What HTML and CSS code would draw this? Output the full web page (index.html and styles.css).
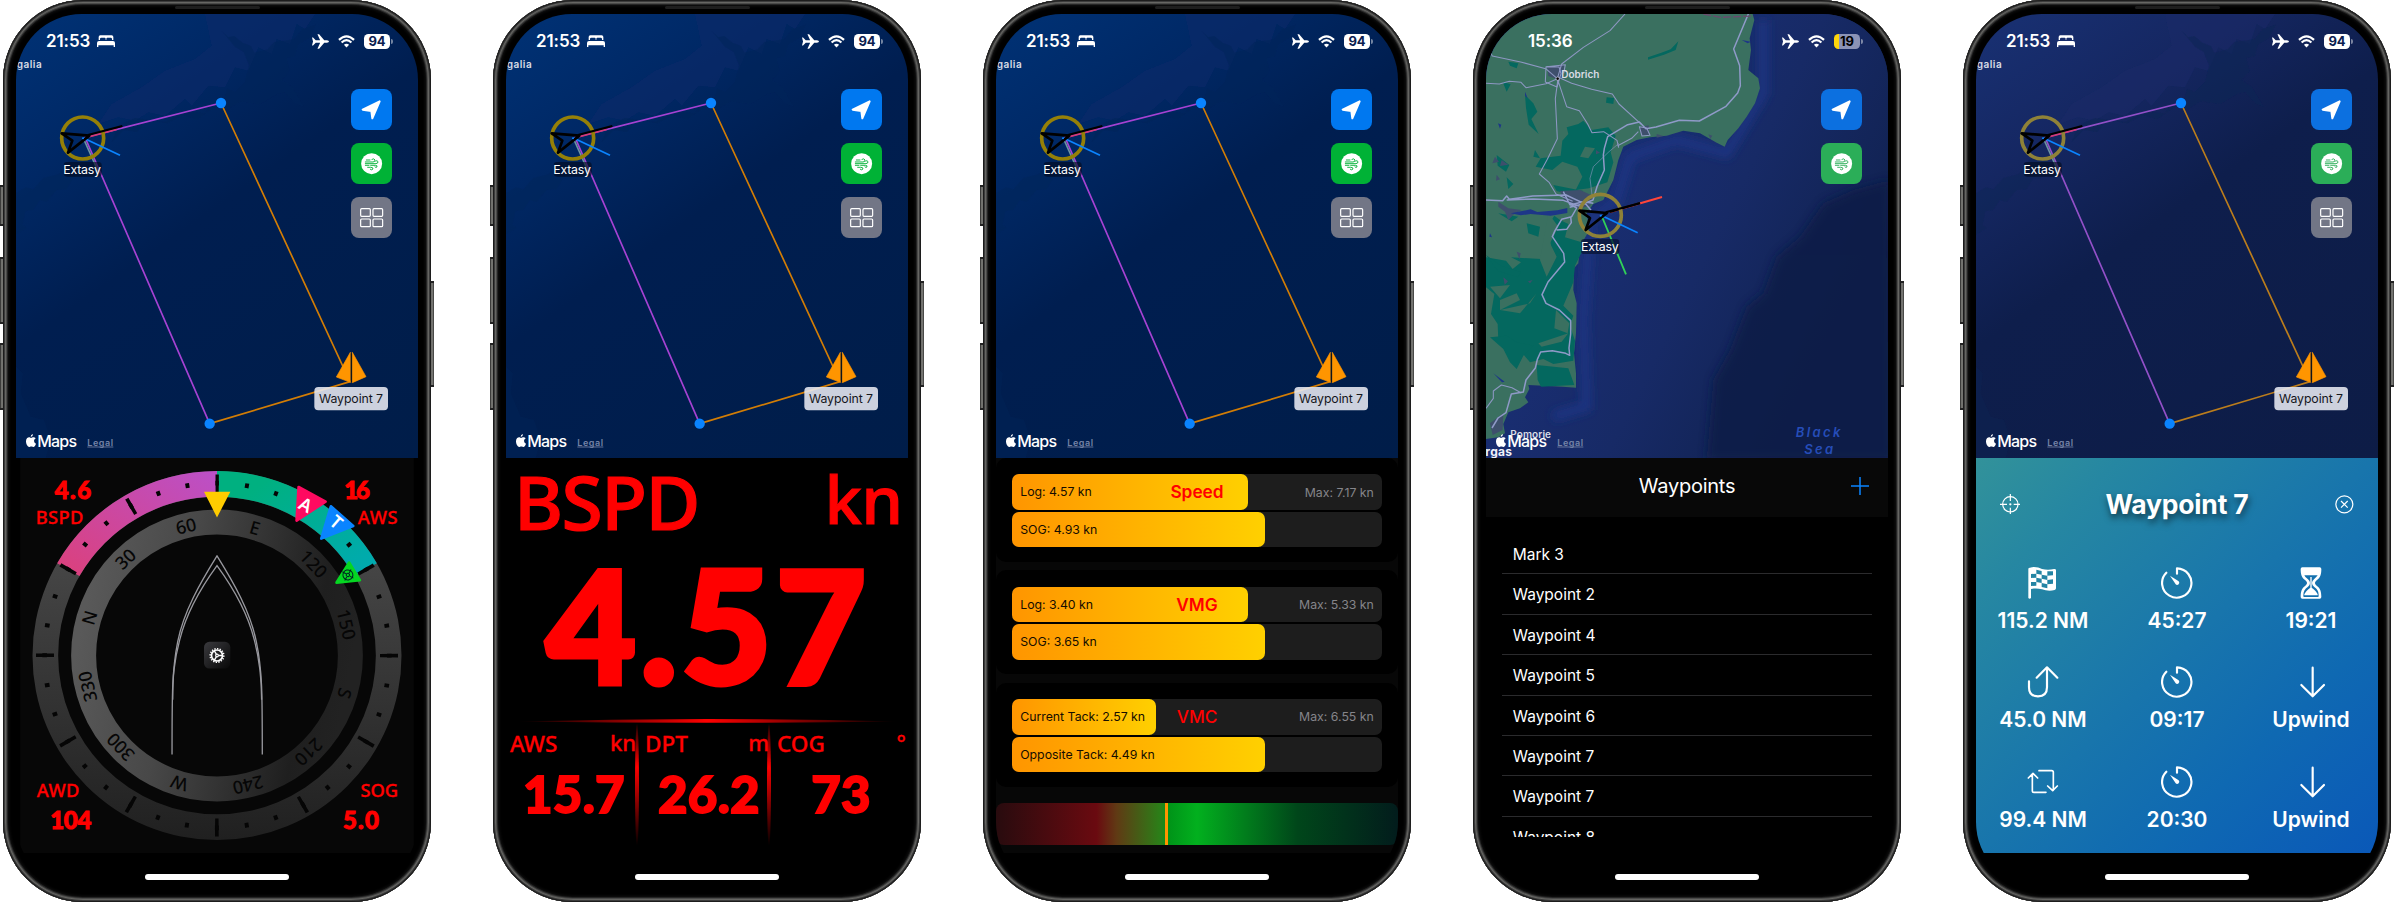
FILE: index.html
```html
<!DOCTYPE html>
<html lang="en">
<head>
<meta charset="utf-8">
<title>Sailing app screens</title>
<link rel="stylesheet" href="styles.css">
</head>
<body>
<svg class="defs" aria-hidden="true">
  <defs>
    <filter id="soft"><feGaussianBlur stdDeviation="1.6"/></filter>
  </defs>
  <symbol id="bed" viewBox="0 0 54 36"><path fill="currentColor" d="M5 15V6q0-5 5-5h34q5 0 5 5v9h-4v-3q0-4-4-4H31q-3 0-3 4v3h-2v-3q0-4-3-4H13q-4 0-4 4v3zM0 36V24q0-6 6-6h42q6 0 6 6v12h-4v-5H4v5z"/></symbol>
  <symbol id="plane" viewBox="0 0 50 44"><path fill="currentColor" d="M0 10h3l8 8h13L16 1h5l15 17h8q6 1 6 4t-6 4h-8L21 43h-5l8-17H11l-8 8H0l3-12z"/></symbol>
  <symbol id="wifi" viewBox="0 0 52 38"><g fill="none" stroke="currentColor" stroke-width="6.500"><path d="M3 14Q26-8 49 14"/><path d="M11 22q15-14 30 0"/></g><path fill="currentColor" d="M18 29q8-7 16 0l-8 8z"/></symbol>
  <symbol id="arrow" viewBox="0 0 124 124"><path fill="#fff" stroke="#fff" stroke-width="6" stroke-linejoin="round" d="M86 37 35 62l26 4 3 22z"/></symbol>
  <symbol id="wind" viewBox="0 0 124 124"><circle cx="62" cy="62" r="31.500" fill="#fff"/><g fill="none" stroke="currentColor" stroke-width="2.800" stroke-linecap="round"><path d="M43 57h23q7 0 6-6-2-6-9-2"/><path d="M43 62h32q7-1 6-6-2-5-7-2"/><path d="M46 51h11"/><path d="M43 67h11M59 67h14q7 0 5 5-3 3-6 0"/><path d="M50 73h9q8 0 7 5-3 5-8 1"/></g></symbol>
  <symbol id="tiles" viewBox="0 0 124 124"><g fill="none" stroke="#fff" stroke-width="3.600"><rect x="29" y="35" width="29" height="23" rx="3"/><rect x="66" y="35" width="29" height="23" rx="3"/><rect x="29" y="66" width="29" height="23" rx="3"/><rect x="66" y="66" width="29" height="23" rx="3"/></g></symbol>
  <symbol id="apple" viewBox="0 0 30 40"><path fill="#fff" d="M21 0q0 8-7 9 0-7 7-9zM15 12c3 0 5-3 9-2q4 1 5 3-5 3-5 8 1 6 6 8c-2 6-5 11-9 10-4-2-6-2-10 0C5 40 0 30 0 22c0-9 6-13 11-12z"/></symbol>
  <symbol id="boat" viewBox="-70 -70 420 260" overflow="visible">
    <circle r="63" fill="none" stroke="var(--ring)" stroke-width="11"/>
    <path d="M2 0 112 52" stroke="#0a84ff" stroke-width="5"/>
    <path d="M16-9 119-36" stroke="#000" stroke-width="6"/>
    <path d="M-63-14 20-7-44 44-31 8z" fill="none" stroke="#000" stroke-width="8" stroke-linejoin="round"/>
    <circle cx="1" cy="1" r="3" fill="#0a84ff"/>
  </symbol>
  <symbol id="timer" viewBox="0 0 96 96"><path d="M48 20V4A44 44 0 1 1 16 17" fill="none" stroke="#fff" stroke-width="6.500" stroke-linecap="round" stroke-linejoin="round"/><path d="m27 26 26 17q4 5 0 9-5 4-9 0z" fill="#fff"/></symbol>
  <symbol id="down" viewBox="0 0 96 96"><path d="M53 5v86M19 57l34 34 34-34" fill="none" stroke="#fff" stroke-width="6.500" stroke-linecap="round" stroke-linejoin="round"/></symbol>
  <symbol id="route-map" viewBox="48 42 1206 1332">
    <path fill="var(--shelf)" filter="url(#soft)" opacity=".6" d="M615 42h330l-30 45-25-15-20 60-40-15-15 45-40-20-30 70-40-10-30 60-50-5-50 60-20-20-60 50-50-10-40 25-50-10-60 20 40-60 90-50 70-50 90-35 50-40z"/>
    <path fill="var(--shade)" filter="url(#soft)" opacity=".55" d="M665 92l20 20 18-4 24 20 26 10 10 20 40-10 20-22 60-8 24-30 40-14-20 40-34 20-8 34-26 6 10 40-24 26 30 20 36 60-26-10-30-34-24 6-50 30-60-8-40 26-30-14-60 42-40-12-50 24-60-10-30 36-40-6-36 36 20-50 50-22 90 12 60-30 60 4 16-26 40-8 10-40 24 10 30-30 12-50-16-40-26-16z"/>
    <path fill="var(--shade)" filter="url(#soft)" opacity=".45" d="M48 580l30-18 22 6 30-34 46-12 34-44 30-10 30 20-30 50-20-4-20 34-30 2-30 36-20-6-20 30-24 4-8 40 12 10-32 20z"/>
    <path fill="var(--shade)" filter="url(#soft)" opacity=".35" d="M48 1100l20 20-6 60 30 70 40 10 20 60-15 54H48z"/>
    <text class="place" x="50" y="205" textLength="75">galia</text>
    <g fill="none" stroke-width="5">
      <path stroke="var(--leg)" d="m663 309-408 103L629 1271"/>
      <path stroke="var(--next)" d="m663 309 387 836-421 126"/>
      <path stroke="#d23a7a" d="m268 410 82-22"/>
      <path stroke="#6d93a3" d="m251 417 44 98"/>
    </g>
    <circle cx="663" cy="309" r="15.500" fill="#0a84ff"/><circle cx="629" cy="1271" r="15.500" fill="#0a84ff"/>
    <use href="#boat" x="178" y="344" width="420" height="260"/>
    <rect x="191" y="486" width="114" height="44" rx="10" fill="#020b20" opacity=".65"/>
    <text class="tag" x="190" y="521" textLength="113">Extasy</text>
    <path d="M1051 1057v90l-42-16zM1057 1057l41 73-41 18z" fill="#ff9500" stroke="#ff9500" stroke-linejoin="round" stroke-width="2"/><path d="M1054 1060v86" stroke="#111" stroke-width="3"/>
    <rect x="943" y="1161" width="221" height="70" rx="12" fill="#e8eaf2" opacity=".88"/>
    <text class="tag dark" x="957" y="1209" textLength="192">Waypoint 7</text>
    <use href="#credit"/>
  </symbol>
  <symbol id="credit" overflow="visible">
    <use href="#apple" x="78" y="1302" width="30" height="40"/>
    <text class="maps" x="112" y="1341" textLength="119">Maps</text>
    <text class="legal" x="262" y="1337" textLength="77">Legal</text>
    <path d="M262 1341h78" stroke="#7482a6" stroke-width="2.500"/>
  </symbol>
</svg>

<main class="gallery">
  <article class="phone night">
    <i class="key k1"></i><i class="key k2"></i><i class="key k3"></i><i class="key k4"></i>
    <div class="shell"><i class="speaker"></i><div class="screen">
      <section class="map">
        <svg class="chart"><use href="#route-map"/></svg>
        <header class="status"><span class="time">21:53</span><svg class="bed"><use href="#bed"/></svg><svg class="plane"><use href="#plane"/></svg><svg class="wifi"><use href="#wifi"/></svg><span class="battery">94</span></header>
        <nav class="tools"><span class="tool blue"><svg><use href="#arrow"/></svg></span><span class="tool green"><svg><use href="#wind"/></svg></span><span class="tool grey"><svg><use href="#tiles"/></svg></span></nav>
      </section>
      <section class="panel">
        <svg class="dial" viewBox="48 54 1206 1186">
          <defs>
            <linearGradient id="rim" x1="0" y1="0" x2="0" y2="1"><stop offset=".2" stop-color="#484848"/><stop offset="1" stop-color="#202020"/></linearGradient>
            <linearGradient id="card" x1="0" y1=".35" x2="1" y2=".55"><stop offset="0" stop-color="#595959"/><stop offset=".35" stop-color="#484848"/><stop offset=".85" stop-color="#1f1f1f"/><stop offset="1" stop-color="#222"/></linearGradient>
            <linearGradient id="port" x1="0" y1="1" x2="1" y2="0"><stop offset="0" stop-color="#dc407a"/><stop offset="1" stop-color="#bb50c8"/></linearGradient>
            <linearGradient id="star" x1="0" y1="0" x2="1" y2="1"><stop offset=".2" stop-color="#00b080"/><stop offset="1" stop-color="#00aab4"/></linearGradient>
            <linearGradient id="btn" x1="0" y1="0" x2="1" y2="1"><stop offset="0" stop-color="#3a3a3e"/><stop offset="1" stop-color="#080808"/></linearGradient>
          </defs>
          <path fill="#070707" d="M60 54h1182v1186H60z"/>
          <path fill="url(#rim)" fill-rule="evenodd" d="M97 647a554 554 0 0 1 1108 0a554 554 0 0 1-1108 0zM174 647a477 477 0 0 0 954 0a477 477 0 0 0-954 0z"/>
          <path fill="url(#port)" d="M171.200 370A554 554 0 0 1 651 93v77A477 477 0 0 0 237.900 408.500z"/>
          <path fill="url(#star)" d="M1130.800 370A554 554 0 0 0 651 93v77a477 477 0 0 1 413.100 238.500z"/>
          <g transform="rotate(-90 651 647)" fill="none" stroke="#050505">
            <circle cx="651" cy="647" r="517.500" stroke-width="14" pathLength="36" stroke-dasharray=".13 .87" stroke-dashoffset=".065"/>
            <circle cx="651" cy="647" r="516.500" stroke-width="54" pathLength="12" stroke-dasharray=".04 .96" stroke-dashoffset=".02"/>
          </g>
          <circle cx="651" cy="647" r="400.500" fill="none" stroke="url(#card)" stroke-width="75"/>
          <g class="bearing" transform="translate(651 647)">
            <text transform="rotate(-13.500)" y="-380">60</text><text transform="rotate(16.500)" y="-380">E</text><text transform="rotate(46.500)" y="-380">120</text><text transform="rotate(76.500)" y="-380">150</text><text transform="rotate(106.500)" y="-380">S</text><text transform="rotate(136.500)" y="-380">210</text><text transform="rotate(166.500)" y="-380">240</text><text transform="rotate(196.500)" y="-380">W</text><text transform="rotate(226.500)" y="-380">300</text><text transform="rotate(256.500)" y="-380">330</text><text transform="rotate(286.500)" y="-380">N</text><text transform="rotate(316.500)" y="-380">30</text>
          </g>
          <g fill="none" stroke="#98989e" stroke-width="4">
            <path d="M516 944C516 760 516 690 533 605 551 515 600 430 651 348 702 430 751 515 769 605 787 690 787 760 787 944"/>
            <path d="M518 780C518 710 522 665 539 600 560 515 605 440 651 377 697 440 742 515 763 600 780 665 785 710 785 780"/>
          </g>
          <rect x="612" y="606" width="79" height="80" rx="16" fill="url(#btn)"/>
          <g fill="none" stroke="#fff" transform="translate(651 647)"><circle r="16.500" stroke-width="5"/><circle r="20.500" stroke-width="4.500" pathLength="16" stroke-dasharray=".5 .5"/><path stroke-width="4" d="M4 0h12M-2-4-8-14M-2 4-8 14"/><circle r="4" stroke-width="3.500"/></g>
          <path fill="#ffcc00" d="M612 155h79l-40 78z"/>
          <g stroke-width="8" stroke-linejoin="round">
            <path fill="#ff0a60" stroke="#ff0a60" d="m896 141 81 44-87 57z"/>
            <path fill="#0a84ff" stroke="#0a84ff" d="m993 199 67 59-96 38z"/>
            <path fill="#06d622" stroke="#06d622" d="m1048 368 32 53-70 7z"/>
          </g>
          <text class="mark" transform="translate(917 195) rotate(28)" y="19">A</text><text class="mark" transform="translate(1009 247) rotate(40)" y="19">T</text>
          <g transform="translate(1044 405) rotate(30)" fill="none" stroke="#022" stroke-width="3"><circle r="15"/><path d="M-19 0H-7M7 0h12M0-19V-7M0 7v12"/><circle r="5"/></g>
          <g class="num"><text x="164" y="177" textLength="109">4.6</text><text x="1033" y="177" textLength="77">16</text><text x="150" y="1167" textLength="124">104</text><text x="1029" y="1167" textLength="108">5.0</text></g>
          <g class="lbl"><text x="107" y="251" textLength="143">BSPD</text><text x="1074" y="251" textLength="119">AWS</text><text x="110" y="1071" textLength="128">AWD</text><text x="1082" y="1071" textLength="113">SOG</text></g>
        </svg>
      </section>
      <i class="home"></i>
    </div></div>
  </article>

  <article class="phone night">
    <i class="key k1"></i><i class="key k2"></i><i class="key k3"></i><i class="key k4"></i>
    <div class="shell"><i class="speaker"></i><div class="screen">
      <section class="map">
        <svg class="chart"><use href="#route-map"/></svg>
        <header class="status"><span class="time">21:53</span><svg class="bed"><use href="#bed"/></svg><svg class="plane"><use href="#plane"/></svg><svg class="wifi"><use href="#wifi"/></svg><span class="battery">94</span></header>
        <nav class="tools"><span class="tool blue"><svg><use href="#arrow"/></svg></span><span class="tool green"><svg><use href="#wind"/></svg></span><span class="tool grey"><svg><use href="#tiles"/></svg></span></nav>
      </section>
      <section class="panel readout">
        <div class="big-head"><span class="big-name">BSPD</span><span class="big-unit">kn</span></div>
        <div class="big-value">4.57</div>
        <svg class="rule" viewBox="0 0 402 6" preserveAspectRatio="none"><defs><linearGradient id="fade"><stop offset="0" stop-color="#f00" stop-opacity="0"/><stop offset=".5" stop-color="#f00"/><stop offset="1" stop-color="#f00" stop-opacity="0"/></linearGradient></defs><path fill="url(#fade)" d="M10 3.500Q201-1.500 392 3.500 201 6 10 3.500z"/></svg>
        <div class="trio">
          <div class="cell"><div class="cell-head"><span>AWS</span><span class="u">kn</span></div><div class="cell-value">15.7</div></div>
          <div class="cell barred"><div class="cell-head"><span>DPT</span><span class="u">m</span></div><div class="cell-value">26.2</div></div>
          <div class="cell barred"><div class="cell-head"><span>COG</span><span class="u deg">°</span></div><div class="cell-value mid">73</div></div>
        </div>
      </section>
      <i class="home"></i>
    </div></div>
  </article>

  <article class="phone night">
    <i class="key k1"></i><i class="key k2"></i><i class="key k3"></i><i class="key k4"></i>
    <div class="shell"><i class="speaker"></i><div class="screen">
      <section class="map">
        <svg class="chart"><use href="#route-map"/></svg>
        <header class="status"><span class="time">21:53</span><svg class="bed"><use href="#bed"/></svg><svg class="plane"><use href="#plane"/></svg><svg class="wifi"><use href="#wifi"/></svg><span class="battery">94</span></header>
        <nav class="tools"><span class="tool blue"><svg><use href="#arrow"/></svg></span><span class="tool green"><svg><use href="#wind"/></svg></span><span class="tool grey"><svg><use href="#tiles"/></svg></span></nav>
      </section>
      <section class="panel gauges">
        <div class="group">
          <div class="bar"><span class="fill" style="width:63.8%">Log: 4.57 kn</span><span class="max">Max: 7.17 kn</span><b class="bar-title">Speed</b></div>
          <div class="bar"><span class="fill" style="width:68.3%">SOG: 4.93 kn</span></div>
        </div>
        <div class="group">
          <div class="bar"><span class="fill" style="width:63.8%">Log: 3.40 kn</span><span class="max">Max: 5.33 kn</span><b class="bar-title">VMG</b></div>
          <div class="bar"><span class="fill" style="width:68.3%">SOG: 3.65 kn</span></div>
        </div>
        <div class="group">
          <div class="bar"><span class="fill" style="width:39%">Current Tack: 2.57 kn</span><span class="max">Max: 6.55 kn</span><b class="bar-title thin">VMC</b></div>
          <div class="bar"><span class="fill" style="width:68.3%">Opposite Tack: 4.49 kn</span></div>
        </div>
        <div class="meter"><i class="needle"></i></div>
      </section>
      <i class="home"></i>
    </div></div>
  </article>

  <article class="phone dusk">
    <i class="key k1"></i><i class="key k2"></i><i class="key k3"></i><i class="key k4"></i>
    <div class="shell"><i class="speaker"></i><div class="screen">
      <section class="map">
        <svg class="chart" viewBox="48 42 1206 1332">
          <defs><linearGradient id="deep" x1="0" y1="0" x2="1" y2=".55"><stop offset=".3" stop-color="#1a2f76"/><stop offset=".65" stop-color="#172a66"/><stop offset="1" stop-color="#10214f"/></linearGradient><filter id="haze"><feGaussianBlur stdDeviation="14"/></filter></defs>
          <path fill="url(#deep)" d="M48 42h1206v1332H48z"/>
          <path fill="#0c1b46" filter="url(#haze)" opacity=".85" d="M1260 540l-110 30-90 40-70 100-70 60-40 110-50 40-50 130-50 90-20 240h560z"/>
          <path fill="none" stroke="#1b3484" stroke-width="26" filter="url(#haze)" d="M880 60v220l-110 180-150-40-140 50-40 130-80 60-20 300 10 260-100 30"/>
          <path fill="#3a7060" d="M48 42h800l5 18-14 55 4 35-8 60 30 25 5 30-15 45-25 40-25 35-32 35-9 20-24-12-50-28-50-8-50 15-50 5-40 8-40 20-15 40-15 60-20 40-10 20-30 12-20 28 8 50-28 50-5 50-13 15-2 65 10 40-2 90-6 60 6 60v43l-40-3-103-5 3 12-13 25 10 15-25 18-35 12-15 35 5 28-20 12-37 5z"/>
          <g fill="#04685f">
            <path d="M340 362l25 28 50-8 22 25-15 50 8 30-18 60-55 18-40 5 20-40-15-30-45-15-30 25-50-10 15-25 60-8 5-45 18-20-5-20 35-10z"/>
            <path d="M165 285l25 25 12 25-18 22 22 45-30-28-8-50zM98 245l24 8-12 22zM115 185l30 5-5 15-20-8zM410 292l22 2-2 18-22-4zM195 450l15 25-20-5zM80 465l38 30-10 20-25-18zM110 532l20 20-15 15z"/>
            <path d="M534 172l40-14 28-10 23-24-8 26-35 14-48 15zM250 555l90 18-20 15-60-15z"/>
            <path d="M270 660l25 12-10 40 50 15 5 20-25 50-5 50-30 70 30 30-10 30 15 45-5 60-60 10-30-15-40 10-50-60-45-5-2-50-20-30 10-60-25-20v-90l60 10 20 25 25-20-30-15 90 5 30-40-10-60 20-30z"/>
            <path d="M48 765l45 32 60 20-10 15-60-20zM200 1095l95 10 18 50-100 5-10-20zM60 1012l50-5 30 20 50 10-30 30-20 40-20-20-20-40zM170 670l40 10-5 30-30-10zM85 640l60 10-20 14z"/>
          </g>
          <g fill="#3a7060"><path d="M235 640l30 40-25 50 20 40-30 60-20-50zM90 900l50-20 10 20-60 30zM60 860l60-5-30 40zM200 880l-20 30-90 20 60 10zM258 930l40 40-5 30-40-15zM205 1030l90-30-20 25-60 15zM330 470l15-30 30 5-20 30z"/></g>
          <g fill="#3e4f6c"><path d="M232 200l50-5-2 30-10 15-35-12zM508 382l28-6 2 28-24 2zM270 573l60-3 40 18-10 30-40 8-40-30zM75 470l12 15-20 5zM95 480l20 14-25 4zM85 605l30 20 40 5-20 10-20 20-10-25-20-15zM378 450l12 8-12 5zM80 524l10 14-12 4zM100 832l14 12-10 10zM140 755l12 5-4 18zM180 850l8-10-14 4zM715 403l12 4-6 10zM560 402l20 6-20 5zM60 1270l40-30-2 50-30 15z"/></g>
          <g fill="#1d3688"><path d="M122 640l60-12 20 8 60-5 30-7v15l-50 8-60-5-30 4zM165 275l8 20-8-8zM84 370l10 4-4 12zM60 700l6 12-8-2zM70 1120l34 25-8 2zM815 120l28 5-10 5z"/></g>
          <g fill="none" stroke="#8d97c2" stroke-width="3.200" stroke-linejoin="round">
            <path d="M465 42 420 92l-80 50-65 50-13 44-35-30-75-20-85-18-10-18M48 250l40 2 30-8 35 3 15 16 60-12 34-15M264 236l-8 60 6 120-30 62-24 44 30 26 20 34 50 22"/>
            <path d="M262 236l28 84 38 12 25 40 13 26 35-3 40 26 5 22M265 232l40 18 60 18 62 14 20 30 68 62M228 200l-2 46 35 15 12-40-6-20zM230 200l56-6-5 26"/>
            <path d="M447 430l-30 25-47 45-10 35 6 50" stroke-width="2.500" opacity=".7"/>
            <path d="M48 1225l22-30v-22l24-18 32 8 28 16M505 395l-20 20-42 22M508 380l22 4 10 22-24 2z"/>
          </g>
          <g fill="none" stroke="#8f9ac8" stroke-width="4.500" stroke-linejoin="round">
            <path d="M835 42l-44 105 18 50 2 60-8 22-35 40-80 44-60-2-70 20-30 5-20-20-35 8-60 36-10 35-3 20 3 45-22 50-12 40-30 12-40 10"/>
            <path d="M48 600l50 2 12-14 8 10 70-10 100-3 60 28 15 18M110 600l80-3 90 4 50 18M300 612l20 12-15 26-30 8-20 34-8 18 34 50 3 26-50 60-18 38 12 26 40 20 34 32v40l-5 42 2 22-12-6-40-8-35 4-10 22-6 26-28 36-8 36-36 6-16 56-24 16-18 30M260 690l30-2 14-20-2-18M280 575l20 40 40-10 30 5"/>
          </g>
          <path fill="none" stroke="#6b4a6e" stroke-width="4" stroke-dasharray="24 6" d="M700 42l50 10 98-4"/>
          <circle cx="263" cy="236" r="5" fill="#000" stroke="#ccd" stroke-width="2"/>
          <text class="place" x="274" y="235" textLength="114">Dobrich</text>
          <text class="place" x="121" y="1314" textLength="122">Pomorie</text>
          <text class="place rgas" x="46" y="1369" textLength="80">rgas</text>
          <text class="sea-name" x="977" y="1311" textLength="134">Black</text><text class="sea-name" x="1003" y="1363" textLength="86">Sea</text>
          <g stroke-width="5.500"><path stroke="#ff453a" d="m420 636 156-45"/><path stroke="#30d158" d="m395 648 73 175"/><path stroke="#000" stroke-width="6" d="m420 636 90-27"/></g>
          <use href="#boat" x="321" y="576" width="420" height="260"/>
          <rect x="333" y="717" width="115" height="45" rx="10" fill="#081434" opacity=".75"/>
          <text class="tag" x="333" y="753" textLength="113">Extasy</text>
          <use href="#credit"/>
        </svg>
        <header class="status early"><span class="time">15:36</span><svg class="plane"><use href="#plane"/></svg><svg class="wifi"><use href="#wifi"/></svg><span class="battery low">19</span></header>
        <nav class="tools"><span class="tool blue"><svg><use href="#arrow"/></svg></span><span class="tool green"><svg><use href="#wind"/></svg></span></nav>
      </section>
      <section class="panel">
        <div class="list-head"><h2>Waypoints</h2><svg class="plus" viewBox="0 0 18 18"><path d="M9 0v18M0 9h18" stroke="#0a84ff" stroke-width="1.500"/></svg></div>
        <ul class="list"><li>Mark 3</li><li>Waypoint 2</li><li>Waypoint 4</li><li>Waypoint 5</li><li>Waypoint 6</li><li>Waypoint 7</li><li>Waypoint 7</li><li>Waypoint 8</li></ul>
      </section>
      <i class="home"></i>
    </div></div>
  </article>

  <article class="phone dusk">
    <i class="key k1"></i><i class="key k2"></i><i class="key k3"></i><i class="key k4"></i>
    <div class="shell"><i class="speaker"></i><div class="screen">
      <section class="map">
        <svg class="chart"><use href="#route-map"/></svg>
        <header class="status"><span class="time">21:53</span><svg class="bed"><use href="#bed"/></svg><svg class="plane"><use href="#plane"/></svg><svg class="wifi"><use href="#wifi"/></svg><span class="battery">94</span></header>
        <nav class="tools"><span class="tool blue"><svg><use href="#arrow"/></svg></span><span class="tool green"><svg><use href="#wind"/></svg></span><span class="tool grey"><svg><use href="#tiles"/></svg></span></nav>
      </section>
      <section class="panel waypoint">
        <div class="wp-head">
          <svg class="wp-icon" viewBox="-31 -31 62 62"><g fill="none" stroke="#fff" stroke-width="3.600"><circle r="23"/><path d="M-31 0h21M10 0h21M0-31v21M0 10v21"/></g><circle r="3.500" fill="#fff"/></svg>
          <h2>Waypoint 7</h2>
          <svg class="wp-icon" viewBox="-31 -31 62 62"><g fill="none" stroke="#fff" stroke-width="3.600"><circle r="25.500"/><path d="M-10-10 10 10M10-10-10 10"/></g></svg>
        </div>
        <div class="stats">
          <div class="stat"><svg viewBox="0 0 96 96"><path fill="#fff" fill-rule="evenodd" d="M4 6q0-4 5-4c14-4 26 0 36 4 12 3 24 3 36 0q6-1 6 4v54q0 4-4 5c-14 4-26 2-38-2-12-3-22-3-33-1v27q-4 5-8 0zM12 21v12l16-1V20zM28 8v12l16 3V12zM44 23v12l17 4V26zM61 13v13l17-1V13zM28 32v13l16 3V35zM61 39v13l17-2V37zM12 45v12l16-1V45zM44 48v12l17 4V52z"/></svg><b>115.2 NM</b></div>
          <div class="stat"><svg><use href="#timer"/></svg><b>45:27</b></div>
          <div class="stat"><svg viewBox="0 0 96 96"><path fill="#fff" fill-rule="evenodd" d="M22 1h52q5 0 5 5c0 17-3 26-14 34-7 6-7 10 0 16 11 8 14 17 14 34q0 5-5 5H22q-5 0-5-5c0-17 3-26 14-34 7-6 7-10 0-16C20 32 17 23 17 6q0-5 5-5zM28 25q2 6 11 12 6 5 6 11t-6 11C29 66 25 73 25 86q-1 4 3 4h40q4 0 3-4c0-13-4-20-14-27q-6-5-6-11t6-11 11-12z"/><path fill="#fff" d="M46 30h4v32q15 11 18 20v3H28v-3q3-9 18-20z"/></svg><b>19:21</b></div>
          <div class="stat"><svg viewBox="0 0 96 96"><path d="M6 46v18q0 27 27 27t27-27V4M29 35 60 4l31 31" fill="none" stroke="#fff" stroke-width="6.500" stroke-linecap="round" stroke-linejoin="round"/></svg><b>45.0 NM</b></div>
          <div class="stat"><svg><use href="#timer"/></svg><b>09:17</b></div>
          <div class="stat"><svg><use href="#down"/></svg><b>Upwind</b></div>
          <div class="stat"><svg viewBox="0 0 96 96"><path d="M57 79H21q-5 0-5-5V24M4 36l14-14 14 14M36 14h38q5 0 5 5v54M62 60l15 14 14-14" fill="none" stroke="#fff" stroke-width="5" stroke-linecap="round" stroke-linejoin="round"/></svg><b>99.4 NM</b></div>
          <div class="stat"><svg><use href="#timer"/></svg><b>20:30</b></div>
          <div class="stat"><svg><use href="#down"/></svg><b>Upwind</b></div>
        </div>
      </section>
      <i class="home"></i>
    </div></div>
  </article>
</main>
</body>
</html>
```
FILE: styles.css
```css
* { box-sizing: border-box; }
body { margin: 0; background: #fff; font-family: Inter, "Liberation Sans", sans-serif; overflow: hidden; }
h2, ul { margin: 0; padding: 0; font-weight: inherit; }
i { display: block; }
.defs { position: absolute; width: 0; height: 0; }
.gallery { display: flex; gap: 56px; width: 2394px; height: 902px; }

.phone { position: relative; flex: none; width: 434px; height: 902px; padding: 0 3px; }
.night { --sea-a: #003072; --sea-b: #002865; --sea-c: #001e50; --sea-d: #001d49; --shelf: #0b2a6b; --shade: #00265a; --ring: #958008; --leg: #a542d3; --next: #d27d05; --green: #00b236; --blue: #0078f0; }
.dusk { --sea-a: #182f70; --sea-b: #152762; --sea-c: #0e1e4c; --sea-d: #0d1c46; --shelf: #1b2b68; --shade: #0d2554; --ring: #8f8238; --leg: #9250c8; --next: #bb7d1c; --green: #2bae58; --blue: #0c70e0; }

.key { position: absolute; left: 0; width: 4px; border: 1px solid #222; border-width: 2px 0; background: linear-gradient(90deg, #222, #8a8a85 50%, #333); }
.k1 { top: 185px; height: 41px; }
.k2 { top: 257px; height: 67px; }
.k3 { top: 343px; height: 67px; }
.k4 { top: 281px; height: 106px; left: auto; right: 0; }

.shell { position: relative; width: 428px; height: 902px; padding: 14px 13px; border-radius: 80px; background: #000; box-shadow: inset 0 0 0 1px #1c1c1c, inset 0 0 0 2px #3c3c3c, inset 0 0 0 3px #666663, inset 0 0 0 4px #4a4a49, inset 0 0 0 5px #242424, inset 0 0 3px 6px #111; }
.speaker { position: absolute; top: 6px; left: 172px; width: 85px; height: 3px; border-radius: 2px; background: #1e1e1e; }
.screen { display: flex; flex-direction: column; width: 402px; height: 874px; border-radius: 66px; overflow: hidden; background: #000; }
.map { position: relative; height: 444px; flex: none; background: linear-gradient(145deg, var(--sea-a) 5%, var(--sea-b) 24%, var(--sea-c) 46%, var(--sea-d)); }
.chart { display: block; width: 402px; height: 444px; }
.panel { height: 395px; flex: none; }
.home { width: 144px; height: 6px; margin: 21px auto 0; border-radius: 3px; background: #fff; }

.status { position: absolute; top: 17px; left: 0; width: 402px; height: 20px; padding: 0 28px 0 30px; display: flex; align-items: center; color: #fff; }
.early { padding-left: 42px; }
.time { width: 51px; font-size: 17px; font-weight: 600; letter-spacing: -.1px; line-height: 20px; white-space: nowrap; }
.bed { width: 18px; height: 12px; }
.plane { width: 17px; height: 15px; margin-left: auto; }
.wifi { width: 17px; height: 13px; margin: 0 9px; }
.battery { position: relative; width: 26px; height: 15px; border-radius: 4.500px; background: #fff; color: #0a2050; font-size: 13px; font-weight: 700; line-height: 15px; text-align: center; }
.battery::after { content: ""; position: absolute; right: -2.500px; top: 5px; width: 1.500px; height: 5px; border-radius: 0 2px 2px 0; background: rgba(255, 255, 255, .45); }
.low { background: linear-gradient(90deg, #ffd60a 5px, #8b93b6 5px); color: #000; }

.tools { position: absolute; top: 75px; right: 26px; display: flex; flex-direction: column; gap: 12.500px; }
.tool { width: 41.300px; height: 41.300px; border-radius: 8px; }
.tool svg { display: block; width: 100%; height: 100%; }
.blue { background: var(--blue); }
.green { background: var(--green); color: var(--green); }
.grey { background: #727686; }

.place { font-size: 30px; font-weight: 600; fill: #d9dce6; }
.rgas { font-size: 36px; font-weight: 700; fill: #f0f2fa; }
.sea-name { font-size: 39px; font-weight: 600; font-style: italic; fill: #264db8; }
.tag { font-size: 37px; fill: #fff; }
.dark { fill: #14161c; }
.maps { font-size: 48px; font-weight: 500; fill: #fff; }
.legal { font-size: 27px; font-weight: 600; fill: #7482a6; }

.dial { display: block; width: 402px; height: 395px; }
.bearing { font: 500 54px "Noto Sans", sans-serif; text-anchor: middle; fill: #060606; }
.mark { font: 600 54px "Noto Sans", sans-serif; text-anchor: middle; fill: #fff; }
.num { font: 900 72px Lato, sans-serif; fill: #f00; stroke: #f00; stroke-width: 3px; }
.lbl { font: 500 55px "Noto Sans", sans-serif; fill: #f00; stroke: #f00; stroke-width: 1px; }

.readout { color: #f00; font-family: "Noto Sans", sans-serif; font-weight: 500; }
.big-head { display: flex; justify-content: space-between; height: 84px; padding: 0 5px 0 8px; }
.big-name { font-size: 75px; line-height: 86px; letter-spacing: -1.500px; -webkit-text-stroke: 1.200px #f00; }
.big-unit { font-size: 66px; line-height: 80px; -webkit-text-stroke: 1.200px #f00; }
.big-value { height: 177px; font: 900 156px/164px Lato, sans-serif; text-align: center; letter-spacing: 4px; padding-left: 2px; -webkit-text-stroke: 5px #f00; }
.rule { display: block; width: 402px; height: 6px; margin-top: -1px; }
.trio { display: grid; grid-template-columns: 131px 132px 139px; }
.cell { position: relative; height: 122px; }
.barred::before { content: ""; position: absolute; left: -2px; top: 0; width: 4px; height: 122px; border-radius: 50%; background: linear-gradient(rgba(255, 0, 0, .1), #f00 35%, rgba(255, 0, 0, 0)); }
.cell-head { display: flex; justify-content: space-between; height: 40px; padding: 0 1px 0 4px; font-size: 22.500px; line-height: 39px; -webkit-text-stroke: .3px #f00; }
.barred .cell-head { padding-left: 8px; padding-right: 0; }
.barred .deg { padding-right: 2px; }
.u { line-height: 36px; font-size: 22px; }
.cell-value { height: 60px; font: 900 51px/59px Lato, sans-serif; text-align: right; padding-right: 12px; letter-spacing: .3px; -webkit-text-stroke: 1.800px #f00; }
.barred .cell-value { padding-right: 9px; }
.barred .mid { padding-right: 37px; }

.gauges { display: flex; flex-direction: column; gap: 8.400px; background: #070707; }
.group { display: flex; flex-direction: column; gap: 2px; height: 104px; flex: none; padding: 16.300px 15.700px 0; border-radius: 10px; background: #000; }
.bar { position: relative; display: flex; align-items: center; justify-content: space-between; height: 35.600px; border-radius: 7px; background: #1d1d1d; font-size: 12.300px; }
.fill { height: 100%; padding-left: 8.500px; border-radius: 7px; background: linear-gradient(90deg, #ff9500, #ffd000); color: #150d00; line-height: 36px; white-space: nowrap; }
.max { padding-right: 8.500px; color: #85858a; }
.bar-title { position: absolute; inset: 0; text-align: center; line-height: 36px; font-size: 17.300px; font-weight: 600; color: #f00; }
.thin { font-weight: 500; }
.meter { height: 42px; margin-top: 7.800px; padding-left: 169px; border-radius: 8px; background: linear-gradient(90deg, #280b0e, #6a0a10 25%, #603a14 30%, #2a8018 41%, #009418 43%, #02b01e 50%, #00461a 75%, #021c1c); }
.needle { width: 3px; height: 42px; background: #ff9500; }

.list-head { display: flex; align-items: center; height: 59px; padding: 0 19px 4px 37px; background: #080808; color: #fff; }
.list-head h2 { flex: 1; text-align: center; font-size: 20px; letter-spacing: -.25px; }
.plus { width: 18px; height: 18px; }
.list { height: 320px; padding: 17px 15.700px 0; overflow: hidden; list-style: none; color: #fff; }
.list li { height: 40.400px; padding-left: 11px; border-bottom: 1px solid #2b2b2d; font-size: 15.500px; line-height: 41px; }

.waypoint { background: linear-gradient(135deg, #32929a 0%, #2687a2 18%, #1875ac 50%, #0f69b2 72%, #0a58b8 100%); color: #fff; }
.wp-head { display: flex; justify-content: space-between; align-items: center; height: 92px; padding: 0 23.500px; }
.wp-head h2 { font-size: 26.500px; font-weight: 700; letter-spacing: -.2px; text-shadow: 1px 4px 7px rgba(0, 0, 0, .6); }
.wp-icon { width: 20.700px; height: 20.700px; }
.stats { display: grid; grid-template-columns: repeat(3, 134px); grid-auto-rows: 99.800px; padding-top: 16.500px; }
.stat { display: flex; flex-direction: column; align-items: center; gap: 9px; }
.stat svg { width: 32px; height: 32px; }
.stat b { font-size: 21px; font-weight: 600; line-height: 25px; }
```
